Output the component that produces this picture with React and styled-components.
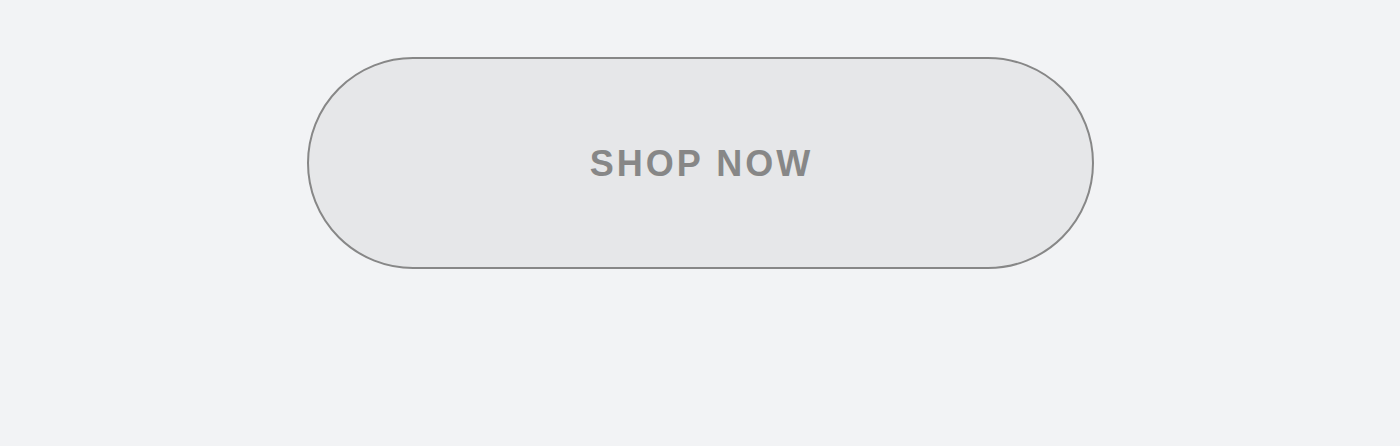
import React from 'react';
import styled, { createGlobalStyle } from 'styled-components';

const GlobalStyle = createGlobalStyle`
	html, body {
		margin: 0;
		padding: 0;
		background: #f2f3f5;
	}
`;

const Page = styled.div`
	display: flex;
	justify-content: center;
	padding-top: 57px;
	height: 446px;
	box-sizing: border-box;
`;

const ShopButton = styled.button`
	width: 787px;
	height: 212px;
	box-sizing: border-box;
	border: 2px solid #878787;
	border-radius: 106px;
	background: #e6e7e9;
	color: #878787;
	font-family: "Liberation Sans", Arial, sans-serif;
	font-size: 36px;
	font-weight: 700;
	letter-spacing: 3px;
	text-indent: 3px;
	text-transform: uppercase;
	cursor: pointer;
	padding: 2px 0 0;
`;

export default function App() {
	return (
		<>
			<GlobalStyle/>
			<Page>
				<ShopButton>Shop now</ShopButton>
			</Page>
		</>
	);
}
